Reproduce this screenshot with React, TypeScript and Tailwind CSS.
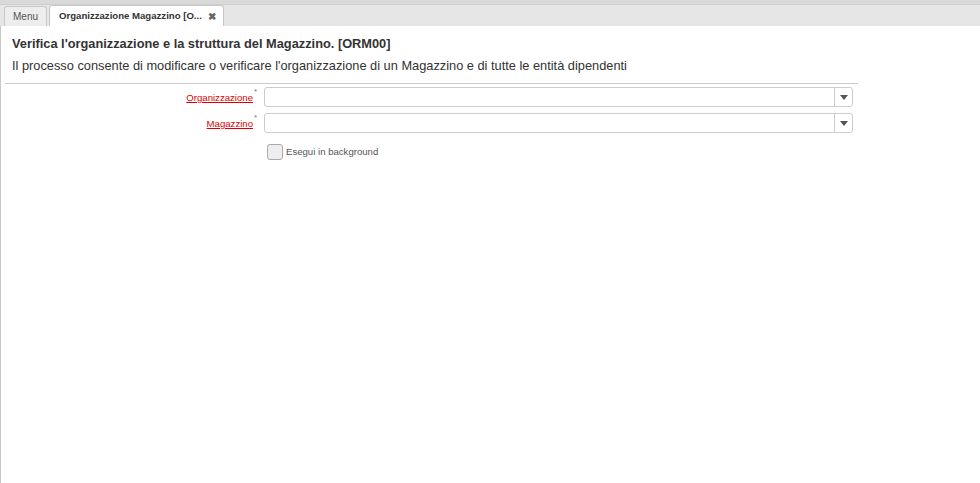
export default function App() {
  return (
    <div className="w-[980px] h-[483px] bg-[#e6e6e6] flex flex-col overflow-hidden" style={{ fontFamily: '"Liberation Sans", Arial, sans-serif' }}>
      {/* Tabs */}
      <div className="h-[5px] bg-[#d9d9d9] border-b border-[#cfcfcf]" />
      <div className="flex items-end h-[21px] pl-[4px] gap-[2px] bg-[#e6e6e6]">
        <div className="h-[20px] w-[43px] flex items-center justify-center bg-[#ededed] border border-[#c8c8c8] border-b-0 rounded-t-[3px] text-[10px] text-[#555]">
          Menu
        </div>
        <div className="h-[21px] w-[175px] flex items-center pl-[9px] bg-white border border-[#c8c8c8] border-b-0 rounded-t-[3px] text-[9.6px] font-bold text-[#333] whitespace-nowrap">
          <span>Organizzazione Magazzino [O...</span>
          <span className="ml-[6px] text-[#666] text-[10px]">✖</span>
        </div>
      </div>

      {/* Content */}
      <div className="flex-1 bg-white border-l border-[#c8c8c8]">
        <div className="pl-[11px] pt-[9px]">
          <h1 className="text-[12.8px] font-bold text-[#333] leading-[18px]">
            Verifica l'organizzazione e la struttura del Magazzino. [ORM00]
          </h1>
          <p className="text-[12.8px] text-[#333] leading-[18px] mt-[4px]">
            Il processo consente di modificare o verificare l'organizzazione di un Magazzino e di tutte le entità dipendenti
          </p>
        </div>
        <div className="ml-[4px] w-[853px] border-t border-[#cccccc] mt-[8px]" />

        <div className="flex flex-col gap-[6px] mt-[3px]">
          {["Organizzazione", "Magazzino"].map((label) => (
            <div key={label} className="flex items-center h-[20px]">
              <div className="w-[252px] text-right text-[9.6px] text-[#e00000] underline leading-[14px] mt-[2px]">
                {label}
              </div>
              <span className="text-[8px] text-[#777] self-start leading-[10px] w-[11px] pl-[1px]">*</span>
              <div className="w-[589px] h-[20px] border border-[#cccccc] rounded-[3px] flex justify-end">
                <div className="w-[18px] border-l border-[#cccccc] flex items-center justify-center">
                  <svg width="8" height="5" viewBox="0 0 8 5">
                    <path d="M0 0 L8 0 L4 5 Z" fill="#555" />
                  </svg>
                </div>
              </div>
            </div>
          ))}
        </div>

        <div className="flex items-center mt-[11px] ml-[266px]">
          <div className="w-[16px] h-[16px] border border-[#aaaaaa] rounded-[3px] bg-[#eeeeee]" />
          <span className="ml-[3px] text-[9.6px] text-[#555]">Esegui in background</span>
        </div>
      </div>
    </div>
  );
}
